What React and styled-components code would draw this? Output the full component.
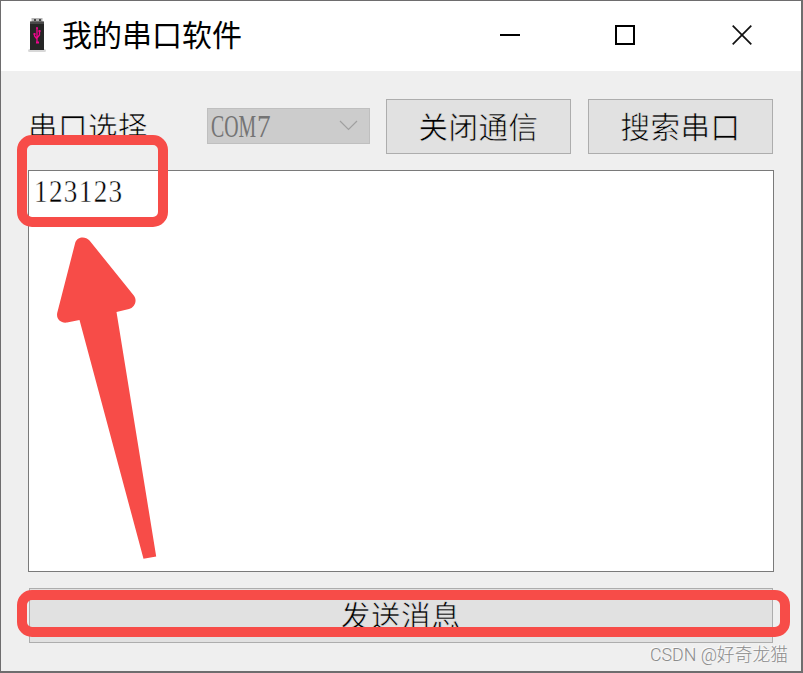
import styled, { createGlobalStyle } from "styled-components";

const GlobalStyle = createGlobalStyle`
  * {
    box-sizing: border-box;
  }

  body {
    margin: 0;
    overflow: hidden;
  }
`;

const Window = styled.div`
  position: relative;
  display: flex;
  flex-direction: column;
  width: 803px;
  height: 673px;
  border: 1px solid #6e6d6e;
  border-right-width: 2px;
  border-bottom-width: 2px;
  background: #efefef;
  overflow: hidden;
`;

const TitleBar = styled.header`
  display: flex;
  align-items: center;
  height: 70px;
  flex: none;
  padding-left: 26px;
  background: #fff;
`;

const Title = styled.h1`
  flex: 1;
  margin: 0 0 0 15px;
  padding-bottom: 5px;
  font: 400 30px/65px "Noto Sans CJK SC", sans-serif;
  color: #000;
`;

const Controls = styled.div`
  display: flex;
  height: 70px;
  padding-right: 1px;
`;

const ControlButton = styled.button`
  display: flex;
  align-items: center;
  justify-content: center;
  width: 116px;
  height: 70px;
  padding: 0 0 2px;
  border: 0;
  background: none;
`;

const Content = styled.main`
  display: flex;
  flex-direction: column;
  padding: 28px 27px 0;
  font: 400 30px/30px "Liberation Serif", "Noto Sans CJK SC", serif;
  color: #000;
`;

const Toolbar = styled.div`
  display: flex;
  align-items: center;
  height: 55px;
  margin-bottom: 16px;
`;

const Label = styled.label`
  width: 179px;
  padding-top: 2px;
  font-size: 29.5px;
  letter-spacing: 0.5px;
  -webkit-text-stroke: 0.6px #efefef;
`;

const Combo = styled.div`
  display: flex;
  align-items: center;
  justify-content: space-between;
  width: 163px;
  height: 36px;
  margin: 0 16px 2px 0;
  padding: 0 11px 0 3px;
  border: 1px solid #bfbfbf;
  background: #ccc;
  color: #747474;
`;

const ComboValue = styled.span`
  display: flex;
  width: 60px;
  font-size: 32px;
`;

const Condensed = styled.span`
  width: 46px;
  transform: scaleX(0.62);
  transform-origin: left;
`;

const Narrow = styled.span`
  transform: scaleX(0.85);
  transform-origin: left;
`;

const Button = styled.button`
  width: ${(p) => p.$width}px;
  height: 55px;
  margin: 0 0 0 ${(p) => p.$left || 0}px;
  padding: ${(p) => p.$drop || 0}px 0 0;
  border: 1px solid #adadad;
  background: #e1e1e1;
  font: inherit;
  font-size: 29.5px;
  letter-spacing: 0.5px;
  color: #000;
  -webkit-text-stroke: 0.6px #e1e1e1;
`;

const Output = styled.div`
  width: 746px;
  height: 402px;
  margin-bottom: 16px;
  padding: 5px 5px;
  border: 1px solid #7a7a7a;
  background: #fff;
`;

const OutputText = styled.span`
  display: inline-block;
  font-size: 32px;
  letter-spacing: 1.6px;
  transform: scaleX(0.848);
  transform-origin: left;
  -webkit-text-stroke: 0.4px #fff;
`;

const Highlight = styled.div`
  position: absolute;
  left: 16.4px;
  top: ${(p) => p.$top}px;
  width: ${(p) => p.$width}px;
  height: ${(p) => p.$height}px;
  border: 10px solid #f74c48;
  border-radius: 15px;
`;

const Arrow = styled.svg`
  position: absolute;
  left: 49px;
  top: 229px;
`;

const Watermark = styled.div`
  position: absolute;
  right: 13px;
  bottom: 3px;
  font: 300 17.8px/26px Roboto, "Noto Sans CJK SC", sans-serif;
  letter-spacing: 0;
  color: #8c8c8c;
  text-shadow: -1px -1px 0 #fafafa;
  white-space: nowrap;
`;

function UsbIcon() {
  return (
    <svg width="20" height="38" viewBox="0 0 20 38">
      <rect x="1" y="32" width="18" height="3" rx="1.5" fill="#d8d8d8" />
      <rect x="4.500" y="1" width="11" height="5" fill="#b4b4b4" />
      <path d="M7 2h2v2H7zM12 2h2v2h-2z" fill="#444" />
      <rect x="3" y="4.500" width="14" height="28.500" fill="#262626" />
      <path d="M3 5h14v2H3z" fill="#484848" />
      <g fill="none" stroke="#f0058d" strokeWidth="1.300">
        <path d="M10 11v14M7.500 17v2l2.500 3M12.500 14v4L10 21M9 11h2" />
      </g>
      <path d="M9 24.500h3v2H9zM6.500 16h2v2h-2zM11.500 13h2v2h-2z" fill="#f0058d" />
    </svg>
  );
}

export default function App() {
  return (
    <>
      <GlobalStyle />
      <Window>
        <TitleBar>
          <UsbIcon />
          <Title>我的串口软件</Title>
          <Controls>
            <ControlButton aria-label="Minimize">
              <svg width="20" height="20">
                <path d="M0 10h20" stroke="#000" strokeWidth="2" />
              </svg>
            </ControlButton>
            <ControlButton aria-label="Maximize">
              <svg width="22" height="20">
                <rect x="1" y="1" width="18" height="18" fill="none" stroke="#000" strokeWidth="2" />
              </svg>
            </ControlButton>
            <ControlButton aria-label="Close">
              <svg width="20" height="20">
                <path d="M.7.700l18.600 18.600M19.300.700L.7 19.300" stroke="#111" strokeWidth="1.700" />
              </svg>
            </ControlButton>
          </Controls>
        </TitleBar>
        <Content>
          <Toolbar>
            <Label>串口选择</Label>
            <Combo>
              <ComboValue>
                <Condensed>COM</Condensed>
                <Narrow>7</Narrow>
              </ComboValue>
              <svg width="19" height="11">
                <path d="M1 1l8.500 8.500L18 1" fill="none" stroke="#a0a0a0" strokeWidth="1.200" />
              </svg>
            </Combo>
            <Button $width={185} $drop={2}>关闭通信</Button>
            <Button $width={185} $left={17} $drop={2}>搜索串口</Button>
          </Toolbar>
          <Output>
            <OutputText>123123</OutputText>
          </Output>
          <Button $width={744} $left={1} $drop={3}>发送消息</Button>
        </Content>
        <Highlight $top={134} $width={150.3} $height={92.3} />
        <Highlight $top={589} $width={773} $height={47.3} />
        <Arrow width="112" height="335" viewBox="50 230 112 335">
          <path
            d="M75.300 242.500C77 237 85 235.500 89.500 240.500L133.800 295.500C138 301 134 308 129 309L116.500 312L156.200 556.500L143.500 558.800L79.500 320L67 322.500C61 323.500 56 319 57.200 313Z"
            fill="#f74c48"
          />
        </Arrow>
        <Watermark>CSDN @好奇龙猫</Watermark>
      </Window>
    </>
  );
}
